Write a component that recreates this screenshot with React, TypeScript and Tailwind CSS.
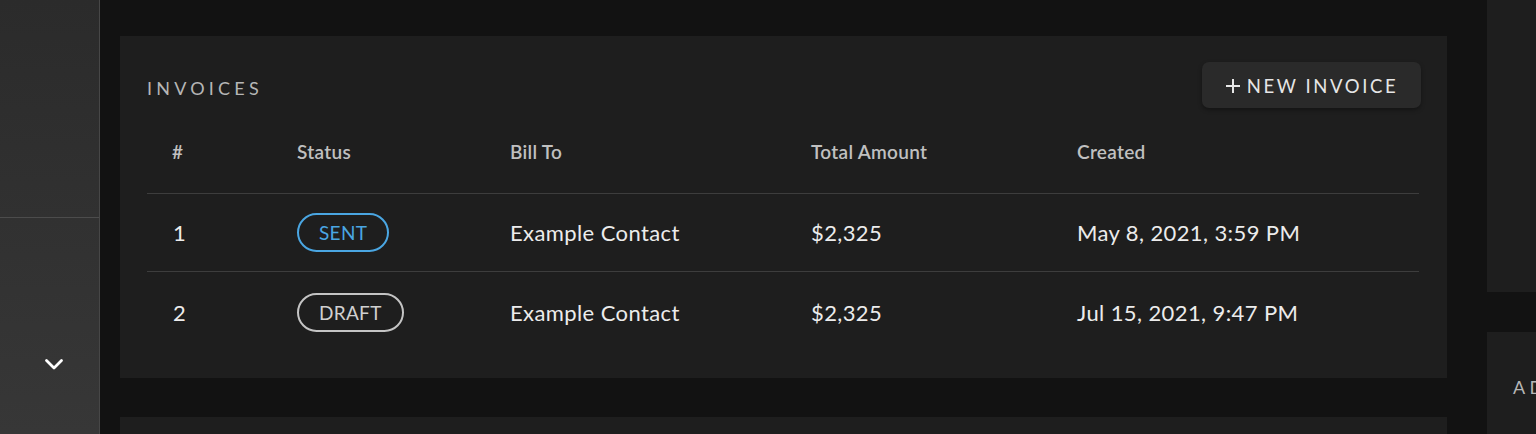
import React from "react";

const rows = [
  { n: "1", status: "SENT", bill: "Example Contact", total: "$2,325", created: "May 8, 2021, 3:59 PM" },
  { n: "2", status: "DRAFT", bill: "Example Contact", total: "$2,325", created: "Jul 15, 2021, 9:47 PM" },
];

function Badge({ status }: { status: string }) {
  const sent = status === "SENT";
  return (
    <span
      className={
        "inline-flex h-[39px] items-center rounded-full border-2 px-[20px] text-[19px] leading-none tracking-[0.3px] " +
        (sent ? "border-[#4aa6e2] text-[#4aa6e2]" : "border-[#c4c4c4] text-[#d0d0d0]")
      }
    >
      {status}
    </span>
  );
}

export default function App() {
  const cols = ["w-[125px]", "w-[213px]", "w-[301px]", "w-[266px]", "flex-1"];
  return (
    <div className="flex h-[434px] w-[1536px] overflow-hidden bg-[#121212] font-['Lato',sans-serif]">
      <aside className="flex w-[100px] shrink-0 flex-col border-r border-[#474747] bg-gradient-to-b from-[#2b2b2b] to-[#373737]">
        <div className="h-[218px] border-b border-[#4c4c4c]" />
        <div className="flex pl-[44px] pt-[140px]">
          <svg width="20" height="13" viewBox="0 0 20 13" fill="none">
            <polyline points="2.5,2.5 10,10 17.5,2.5" stroke="#ffffff" strokeWidth="2.8" strokeLinecap="round" strokeLinejoin="round" />
          </svg>
        </div>
      </aside>

      <main className="flex w-[1387px] shrink-0 flex-col gap-[39px] pl-[20px] pr-[40px] pt-[36px]">
        <section className="h-[342px] shrink-0 bg-[#1e1e1e] pl-[27px] pr-[26px] pt-[26px]">
          <div className="flex h-[46px] items-center justify-between">
            <h2 className="pt-[7px] text-[18px] font-normal tracking-[4.2px] text-[#b6b6b6]">INVOICES</h2>
            <button className="flex h-[46px] w-[219px] items-center justify-center rounded-[7px] bg-[#2a2a2a] pt-[3px] text-[18.5px] tracking-[2.6px] text-[#e6e6e6] shadow-[0_2px_4px_rgba(0,0,0,0.35)]">
              <svg width="16" height="16" viewBox="0 0 16 16" className="mr-[6px] mt-[-2px]">
                <path d="M8 1v14M1 8h14" stroke="#e6e6e6" strokeWidth="2" />
              </svg>
              NEW INVOICE
            </button>
          </div>
          <div className="w-[1272px]">
            <div className="flex h-[86px] border-b border-[#3d3d3d] pt-[32px] text-[19px] font-semibold leading-[24px] tracking-[0.3px] text-[#c0c0c0]">
              {["#", "Status", "Bill To", "Total Amount", "Created"].map((h, i) => (
                <div key={h} className={cols[i] + " pl-[25px]"}>{h}</div>
              ))}
            </div>
            {rows.map((r, idx) => (
              <div
                key={r.n}
                className={
                  "flex items-center text-[22px] tracking-[0.4px] text-[#ececec] " +
                  (idx === 0 ? "h-[78px] border-b border-[#3d3d3d]" : "h-[80px]")
                }
              >
                <div className={cols[0] + " pl-[26px]"}>{r.n}</div>
                <div className={cols[1] + " pl-[25px]"}><Badge status={r.status} /></div>
                <div className={cols[2] + " pl-[25px]"}>{r.bill}</div>
                <div className={cols[3] + " pl-[25px]"}>{r.total}</div>
                <div className={cols[4] + " pl-[25px]"}>{r.created}</div>
              </div>
            ))}
          </div>
        </section>
        <section className="h-[200px] shrink-0 bg-[#1e1e1e]" />
      </main>

      <div className="flex w-[49px] shrink-0 flex-col gap-[40px] overflow-hidden">
        <div className="h-[292px] shrink-0 bg-[#1e1e1e]" />
        <div className="h-[200px] shrink-0 bg-[#1e1e1e] pl-[26px] pt-[42px]">
          <div className="whitespace-nowrap text-[18px] tracking-[4.2px] text-[#b6b6b6]">ADDRESSES</div>
        </div>
      </div>
    </div>
  );
}
